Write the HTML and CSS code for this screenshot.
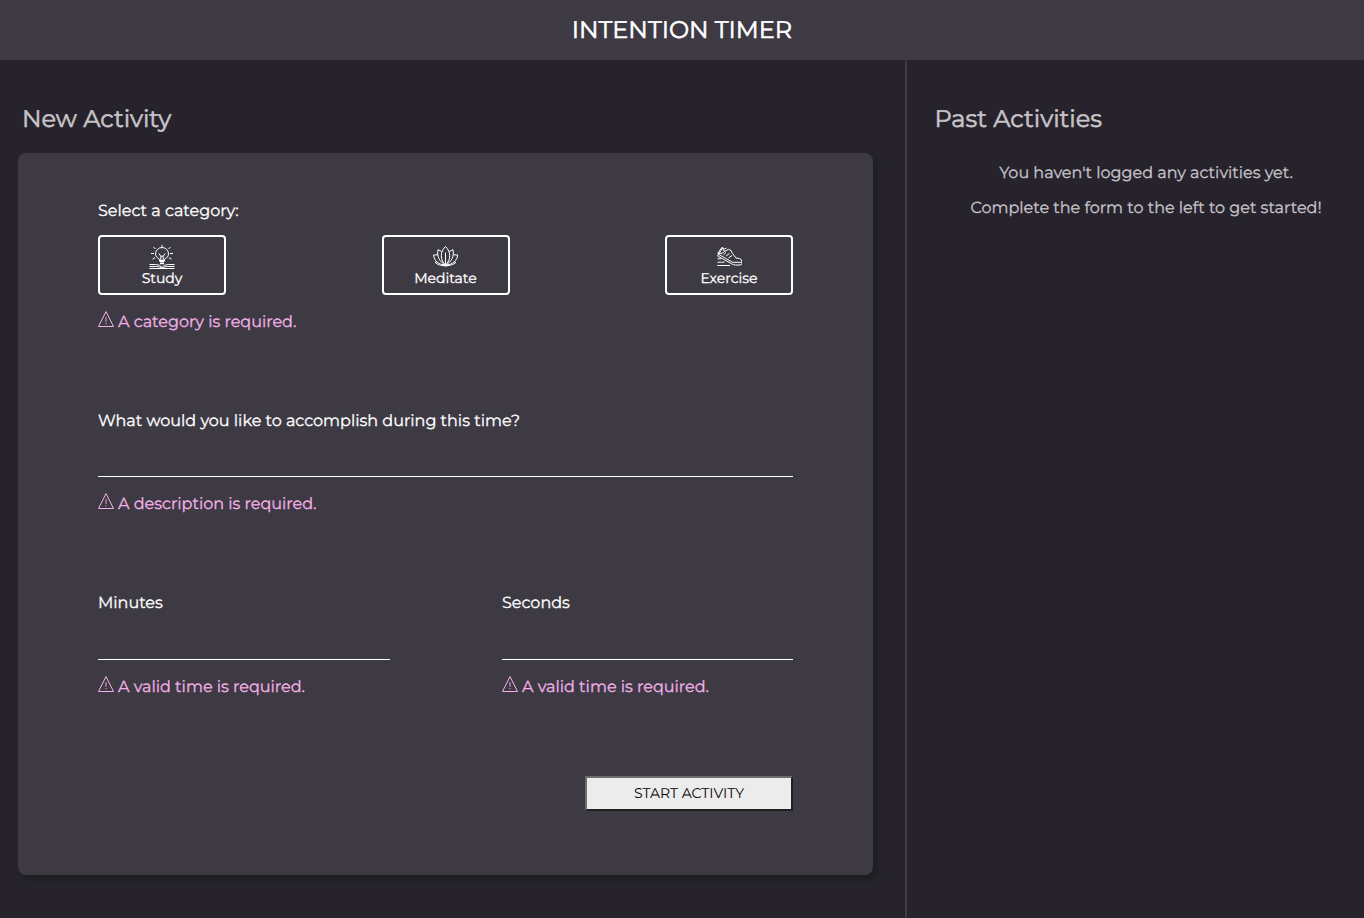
FILE: index.html
```html
<!DOCTYPE html>
<html lang="en">
<head>
<meta charset="utf-8">
<title>Intention Timer</title>
<link rel="stylesheet" href="styles.css">
</head>
<body>
<svg class="sprite" aria-hidden="true">
  <symbol id="warning" viewBox="0 0 16 16"><path d="M8 .6L15.500 15.500H.5Z" fill="none" stroke="currentColor" stroke-width="1"/><path d="M7.200 6h1.600v5H7.200zM7.200 12h1.600v1.200H7.200z" fill="currentColor" opacity=".55"/></symbol>
</svg>
<header class="header"><h1 class="title">INTENTION TIMER</h1></header>
<main class="main">
  <section class="new-activity">
    <h2 class="heading">New Activity</h2>
    <form class="card">
      <div class="field category">
        <p class="label">Select a category:</p>
        <div class="categories">
          <button type="button" class="category-button">
            <svg class="icon" viewBox="0 0 26 26" fill="none" stroke="currentColor"><path d="M13 .8v3M4.500 3l2 2M21.500 3l-2 2M2 9.500h3M21 9.500h3M3.500 15.200l2.500-1.500M22.500 15.200l-2.500-1.500"/><path d="M10.500 17v-1.700C8 14 6.500 12 6.500 10a6.500 6.500 0 0 1 13 0c0 2-1.500 4-4 5.300V17M9.800 9.500l2 2.700v4.800M16.200 9.500l-2 2.700v4.800M11.800 12.200h2.400"/><path d="M10.500 17h5M11 19.300h4" stroke-width="1.800"/><path d="M.5 20.500h6q4.500 0 6.500 3 2-3 6.500-3h6M.5 22.500h7q3 0 5.500 1.700 2.500-1.700 5.500-1.700h7M.5 24.500h25"/></svg>
            <span>Study</span>
          </button>
          <button type="button" class="category-button">
            <svg class="icon" viewBox="0 0 26 26" fill="none" stroke="currentColor"><path d="M12.500 2.500c-3 3-4.200 6-4.200 9.200 0 4 1.700 7.100 4.200 9.100 2.500-2 4.200-5.100 4.200-9.100 0-3.200-1.200-6.200-4.200-9.200zM12.500 8.500v12.500"/><path d="M8.700 7.500L5 5.700c-1.200 6.300 1 12 7.500 15.300M16.300 7.500l3.700-1.800c1.200 6.300-1 12-7.500 15.300M5 10.700L.5 11c.7 5.500 4.500 9.500 12 10.200M20 10.700l4.700.3c-.7 5.500-4.500 9.500-12.200 10.200M3.500 18l-1.500.3q4 3.700 10.500 3.200M21.500 18l1.500.3q-4 3.700-10.500 3.200"/><path d="M9 20.800q3.500 2 7 0" stroke-width="1.600"/></svg>
            <span>Meditate</span>
          </button>
          <button type="button" class="category-button">
            <svg class="icon" viewBox="0 0 26 26" fill="none" stroke="currentColor"><path d="M1.500 9.500L6 3.300 8.500 5l2-1M6.500 4l2 3.500 4-2.200 2.500 1.200 1.500 3 3.500 4.500 3.500.5q2.300.7 2.300 3v2q0 1.500-1.800 1.500h-4.500q-2 0-4-1.300L1.500 12zM2 9.500q5 .5 6.500-2M10 12l3.500-2.500M7.500 10.800l2.500-2.300M12.500 14l3.500-2.500M2 10l14.500 8.300h9"/><path d="M1.500 14.800h3.500M1.500 18.200h7M1.500 21.500h12.500"/></svg>
            <span>Exercise</span>
          </button>
        </div>
        <p class="error"><svg class="warning"><use href="#warning"/></svg><span>A category is required.</span></p>
      </div>
      <div class="field description">
        <label class="label" for="goal">What would you like to accomplish during this time?</label>
        <input class="input" id="goal" type="text">
        <p class="error"><svg class="warning"><use href="#warning"/></svg><span>A description is required.</span></p>
      </div>
      <div class="times">
        <div class="field">
          <label class="label" for="minutes">Minutes</label>
          <input class="input" id="minutes" type="text">
          <p class="error"><svg class="warning"><use href="#warning"/></svg><span>A valid time is required.</span></p>
        </div>
        <div class="field">
          <label class="label" for="seconds">Seconds</label>
          <input class="input" id="seconds" type="text">
          <p class="error"><svg class="warning"><use href="#warning"/></svg><span>A valid time is required.</span></p>
        </div>
      </div>
      <button type="button" class="start">START ACTIVITY</button>
    </form>
  </section>
  <aside class="past">
    <h2 class="heading">Past Activities</h2>
    <p class="empty">You haven't logged any activities yet.</p>
    <p class="empty">Complete the form to the left to get started!</p>
  </aside>
</main>
</body>
</html>
```
FILE: styles.css
```css
* { box-sizing: border-box; margin: 0; padding: 0; }
body { height: 918px; overflow: hidden; display: flex; flex-direction: column; background: #26232d; color: #fff; font: 400 16px/20px Montserrat, Inter, sans-serif; text-rendering: geometricPrecision; -webkit-text-stroke: .3px; }
.sprite { display: none; }
.header { height: 60px; background: #3e3a44; text-align: center; }
.title { font-size: 24px; line-height: 62px; font-weight: 400; -webkit-text-stroke: .6px; }
.main { display: flex; flex: 1; }
.new-activity { width: 905px; padding: 45px 32px 0 18px; }
.heading { font-size: 24px; line-height: 30px; font-weight: 400; color: #c8c3c8; padding-left: 4px; margin-bottom: 18px; -webkit-text-stroke: .6px; }
.card { height: 722px; padding: 49px 80px 0; border-radius: 8px; background: #3e3a44; box-shadow: 4px 4px 4px #1f1e20; display: flex; flex-direction: column; }
.label { display: block; height: 20px; white-space: nowrap; }
.category { height: 210px; }
.description { height: 182px; }
.categories { display: flex; justify-content: space-between; margin-top: 13px; }
.category-button { width: 128px; height: 60px; border: 2px solid #fff; border-radius: 4px; background: transparent; color: #fff; font: 400 14px/16px Montserrat, Inter, sans-serif; text-rendering: inherit; display: flex; flex-direction: column; align-items: center; justify-content: flex-start; padding-top: 7px; }
.icon { width: 26px; height: 26px; flex: none; }
.error { display: flex; align-items: center; gap: 4px; height: 20px; margin-top: 18px; color: #f3b0e8; white-space: nowrap; }
.warning { width: 16px; height: 16px; margin-top: -8px; flex: none; }
.input { display: block; width: 100%; height: 45px; border: 0; border-bottom: 1px solid #fff; background: transparent; color: #fff; outline: none; }
.times { display: grid; grid-template-columns: 292px 291px; justify-content: space-between; height: 182px; }
.times .input { height: 46px; }
.start { width: 208px; height: 35px; align-self: flex-end; padding-bottom: 1px; border: 2px solid; border-color: #6d6d6d #1f1f1f #1f1f1f #6d6d6d; background: #ececec; color: #000; font: 400 14px/18px Montserrat, Inter, sans-serif; text-rendering: inherit; -webkit-text-stroke: 0; }
.past { flex: 1; border-left: 2px solid #3e3a44; padding: 45px 0 0 27.5px; }
.past .heading { padding: 0; margin-bottom: 29px; }
.empty { width: 423px; height: 20px; margin-bottom: 15px; text-align: center; color: #c8c3c8; white-space: nowrap; }
```
